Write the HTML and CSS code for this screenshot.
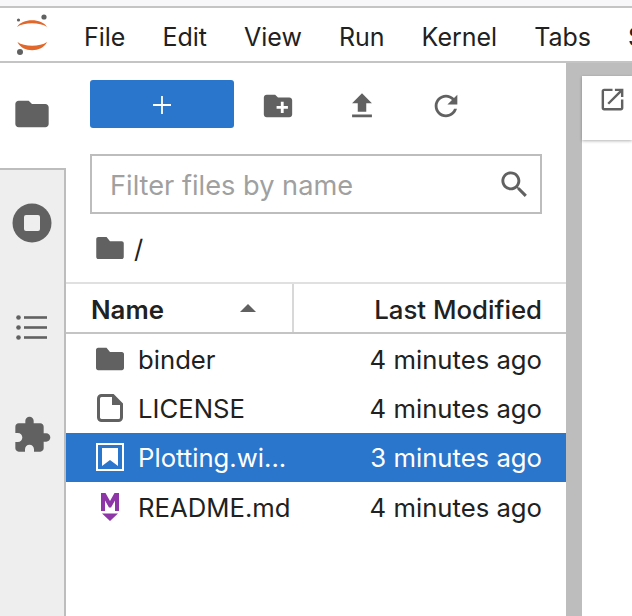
FILE: index.html
```html
<!DOCTYPE html>
<html lang="en">
<head>
<meta charset="UTF-8">
<meta name="viewport" content="width=device-width, initial-scale=1.0">
<title>JupyterLab</title>
<link rel="stylesheet" href="styles.css">
</head>
<body>

<div class="top-strip"></div>

<div class="menu-bar">
    <svg class="logo" viewBox="0 0 32 42">
        <circle cx="28" cy="3" r="2.600" fill="#616161"/>
        <circle cx="4" cy="38" r="3" fill="#616161"/>
        <circle cx="2.500" cy="6" r="1.600" fill="#616161"/>
        <path d="M1 13C6 4 26 4 31 13C24 8 8 8 1 13z" fill="#e2672a"/>
        <path d="M1.500 28C8 33 24 33 31 28C26 39 6 39 1.500 28z" fill="#e2672a"/>
    </svg>
    <nav class="menu">
        <span>File</span>
        <span>Edit</span>
        <span>View</span>
        <span>Run</span>
        <span>Kernel</span>
        <span>Tabs</span>
        <span>Settings</span>
    </nav>
</div>

<div class="workspace">
    <div class="sidebar">
        <div class="side-tab active">
            <svg class="side-icon" viewBox="0 0 24 24"><path d="M10 4H4c-1.100 0-2 .9-2 2v12c0 1.100.9 2 2 2h16c1.100 0 2-.9 2-2V8c0-1.100-.9-2-2-2h-8l-2-2z"/></svg>
        </div>
        <div class="side-tab">
            <svg class="side-icon" viewBox="0 0 40 40"><circle cx="20" cy="20" r="19.500"/><rect x="12" y="12" width="16" height="16" rx="2" fill="#eee"/></svg>
        </div>
        <div class="side-tab">
            <svg class="list-icon" viewBox="0 0 31 25"><circle cx="2.500" cy="2.500" r="2.300"/><circle cx="2.500" cy="12.500" r="2.300"/><circle cx="2.500" cy="22.500" r="2.300"/><rect x="8" y="1.200" width="23" height="2.600"/><rect x="8" y="11.200" width="23" height="2.600"/><rect x="8" y="21.200" width="23" height="2.600"/></svg>
        </div>
        <div class="side-tab">
            <svg class="side-icon" viewBox="0 0 24 24"><path d="M20.500 11H19V7c0-1.100-.9-2-2-2h-4V3.500C13 2.120 11.880 1 10.500 1S8 2.120 8 3.500V5H4c-1.100 0-1.990.9-1.990 2v3.800H3.500c1.490 0 2.700 1.210 2.700 2.700s-1.210 2.700-2.700 2.700H2V20c0 1.100.9 2 2 2h3.800v-1.500c0-1.490 1.210-2.700 2.700-2.700 1.490 0 2.700 1.210 2.700 2.700V22H17c1.100 0 2-.9 2-2v-4h1.500c1.380 0 2.500-1.120 2.500-2.500S21.880 11 20.500 11z"/></svg>
        </div>
    </div>

    <div class="file-panel">
        <div class="toolbar">
            <button class="new-launcher">
                <svg class="plus" viewBox="0 0 18 18"><path d="M8.100 0h1.800v8.100H18v1.800H9.900V18H8.100V9.900H0V8.100h8.100z"/></svg>
            </button>
            <span class="tool">
                <svg class="tool-icon" viewBox="0 0 24 24"><path d="M20 6h-8l-2-2H4c-1.100 0-1.990.9-1.990 2L2 18c0 1.100.9 2 2 2h16c1.100 0 2-.9 2-2V8c0-1.100-.9-2-2-2zm-1 8h-3v3h-2v-3h-3v-2h3V9h2v3h3v2z"/></svg>
            </span>
            <span class="tool">
                <svg class="tool-icon" viewBox="0 0 24 24"><path d="M9 16h6v-6h4l-7-7-7 7h4zm-4 2h14v2H5z"/></svg>
            </span>
            <span class="tool">
                <svg class="tool-icon" viewBox="0 0 24 24"><path d="M17.650 6.350C16.200 4.900 14.210 4 12 4c-4.420 0-7.990 3.580-7.990 8s3.570 8 7.990 8c3.730 0 6.840-2.550 7.730-6h-2.080c-.82 2.330-3.040 4-5.650 4-3.310 0-6-2.690-6-6s2.690-6 6-6c1.660 0 3.140.69 4.220 1.780L13 11h7V4l-2.350 2.350z"/></svg>
            </span>
        </div>

        <div class="filter">
            <span class="filter-text">Filter files by name</span>
            <svg class="search-icon" viewBox="0 0 24 24"><path d="M15.500 14h-.79l-.28-.27C15.410 12.590 16 11.110 16 9.500 16 5.910 13.090 3 9.500 3S3 5.910 3 9.500 5.910 16 9.500 16c1.610 0 3.090-.59 4.230-1.570l.27.28v.79l5 4.990L20.490 19l-4.990-5zm-6 0C7.010 14 5 11.990 5 9.500S7.010 5 9.500 5 14 7.010 14 9.500 11.990 14 9.500 14z"/></svg>
        </div>

        <div class="crumbs">
            <svg class="file-icon" viewBox="0 0 20 16"><path d="M7.500 0H1.500C.7 0 0 .7 0 1.500v13C0 15.300.7 16 1.500 16h17c.8 0 1.500-.7 1.500-1.500v-10C20 3.700 19.300 3 18.500 3H10L7.500 0z"/></svg>
            <span class="slash">/</span>
        </div>

        <div class="list-header">
            <div class="col-name">
                <span class="col-label">Name</span>
                <span class="caret"></span>
            </div>
            <div class="col-modified">Last Modified</div>
        </div>

        <div class="file-row">
            <svg class="file-icon" viewBox="0 0 20 16"><path d="M7.500 0H1.500C.7 0 0 .7 0 1.500v13C0 15.300.7 16 1.500 16h17c.8 0 1.500-.7 1.500-1.500v-10C20 3.700 19.300 3 18.500 3H10L7.500 0z"/></svg>
            <span class="file-name">binder</span>
            <span class="file-time">4 minutes ago</span>
        </div>
        <div class="file-row">
            <svg class="file-icon" viewBox="0 0 28 28"><path d="M5.500 1.500H17L25.500 10V23.500a3 3 0 0 1-3 3h-17a3 3 0 0 1-3-3V4.500a3 3 0 0 1 3-3z" fill="none" stroke="#616161" stroke-width="3"/><path d="M16 1.500V11H25.500z"/></svg>
            <span class="file-name">LICENSE</span>
            <span class="file-time">4 minutes ago</span>
        </div>
        <div class="file-row selected">
            <svg class="file-icon" viewBox="0 0 28 28"><rect x="1" y="1" width="26" height="26" fill="none" stroke="#fff" stroke-width="2"/><path d="M6 5H22V23L14 17L6 23z" fill="#fff"/></svg>
            <span class="file-name">Plotting.wi...</span>
            <span class="file-time">3 minutes ago</span>
        </div>
        <div class="file-row">
            <svg class="file-icon" viewBox="0 0 28 28"><path d="M5 0h4.500L14 8l4.500-8H23v18h-4V7.500l-4 7h-2l-4-7V18H5zM6 20.500h16l-8 7.500z" fill="#8e35a8"/></svg>
            <span class="file-name">README.md</span>
            <span class="file-time">4 minutes ago</span>
        </div>
    </div>

    <div class="splitter"></div>

    <div class="main-area">
        <div class="tab-gap"></div>
        <div class="tab-bar">
            <svg class="open-icon" viewBox="0 0 24 24"><path d="M19 19H5V5h7V3H5c-1.110 0-2 .9-2 2v14c0 1.100.89 2 2 2h14c1.100 0 2-.9 2-2v-7h-2v7zM14 3v2h3.590l-9.830 9.830 1.410 1.410L19 6.410V10h2V3h-7z"/></svg>
        </div>
    </div>
</div>

</body>
</html>
```

FILE: styles.css
```css
html, body {
    margin: 0;
    height: 616px;
    overflow: hidden;
    background: white;
    font-family: "Inter", "Liberation Sans", sans-serif;
    color: #212121;
}
svg {
    display: block;
    fill: #616161;
    flex: none;
}

/* Top of the window */
.top-strip {
    height: 6px;
    background: #f7f7f9;
    border-bottom: 2px solid #c4c4c4;
}
.menu-bar {
    display: flex;
    align-items: center;
    height: 53px;
    border-bottom: 2px solid #c4c4c4;
    overflow: hidden;
}
.logo {
    width: 32px;
    height: 42px;
    margin-left: 16px;
}
.menu {
    display: flex;
    gap: 37px;
    margin-left: 36px;
    padding-top: 5px;
    font-size: 25px;
    white-space: nowrap;
}

.workspace {
    display: flex;
    height: 553px;
}

/* Left icon column */
.sidebar {
    width: 64px;
    flex: none;
    background: #eee;
    border-right: 2px solid #bdbdbd;
}
.side-tab {
    display: flex;
    align-items: center;
    justify-content: center;
    width: 64px;
    height: 106px;
}
.side-tab.active {
    box-sizing: content-box;
    width: 66px;
    height: 102px;
    padding-bottom: 3px;
    background: white;
    border-bottom: 2px solid #bdbdbd;
}
.side-tab.active .side-icon {
    margin-right: 2px;
}
.side-icon {
    width: 40px;
    height: 40px;
}
.list-icon {
    width: 31px;
    height: 25px;
    margin: 0 1px 3px 0;
}

/* File browser */
.file-panel {
    width: 500px;
    flex: none;
}
.toolbar {
    display: flex;
    align-items: center;
    height: 48px;
    margin: 17px 0 26px 24px;
}
.new-launcher {
    display: flex;
    align-items: center;
    justify-content: center;
    width: 144px;
    height: 48px;
    margin-right: 2px;
    padding: 2px 0 0;
    border: none;
    border-radius: 3px;
    background: #2a76cc;
}
.plus {
    width: 18px;
    height: 18px;
    fill: white;
}
.tool {
    display: flex;
    justify-content: center;
    width: 84px;
    padding-top: 4px;
}
.tool-icon {
    width: 34px;
    height: 34px;
}
.filter {
    display: flex;
    align-items: center;
    justify-content: space-between;
    box-sizing: border-box;
    width: 452px;
    height: 60px;
    margin-left: 24px;
    padding: 0 8px 0 18px;
    border: 2px solid #bdbdbd;
}
.filter-text {
    padding-top: 2px;
    font-size: 27.200px;
    color: #a0a0a0;
}
.search-icon {
    width: 35px;
    height: 35px;
}
.crumbs {
    display: flex;
    align-items: center;
    gap: 10px;
    height: 68px;
    padding-left: 30px;
    font-size: 25.600px;
}
.file-icon {
    width: 28px;
    height: 28px;
}
.crumbs .file-icon {
    height: 22px;
}
.list-header {
    display: flex;
    height: 48px;
    border-top: 2px solid #e0e0e0;
    border-bottom: 2px solid #c4c4c4;
    font-size: 25.800px;
}
.col-name {
    display: flex;
    align-items: center;
    justify-content: space-between;
    box-sizing: border-box;
    width: 228px;
    padding: 0 36px 0 25px;
    border-right: 2px solid #d8d8d8;
    font-weight: 600;
}
.col-label {
    padding-top: 3px;
}
.caret {
    border-left: 8px solid transparent;
    border-right: 8px solid transparent;
    border-bottom: 8px solid #616161;
}
.col-modified {
    flex: 1;
    padding: 3px 24px 0 0;
    line-height: 45px;
    text-align: right;
    font-weight: 500;
}
.file-row {
    display: flex;
    align-items: center;
    height: 49.300px;
    padding: 0 24px 0 30px;
    font-size: 25.700px;
}
.file-name {
    flex: 1;
    margin-left: 14px;
    padding-top: 1px;
}
.file-time {
    padding-top: 1px;
}
.file-row.selected {
    background: #2a76cc;
    color: white;
}

/* Right side */
.splitter {
    width: 16px;
    flex: none;
    background: #bdbdbd;
}
.main-area {
    flex: 1;
}
.tab-gap {
    height: 13px;
    background: #bdbdbd;
}
.tab-bar {
    height: 64px;
    box-shadow: 0 1px 3px rgba(0, 0, 0, 0.3);
    padding: 9px 0 0 16px;
    box-sizing: border-box;
}
.open-icon {
    width: 29px;
    height: 29px;
}
```
